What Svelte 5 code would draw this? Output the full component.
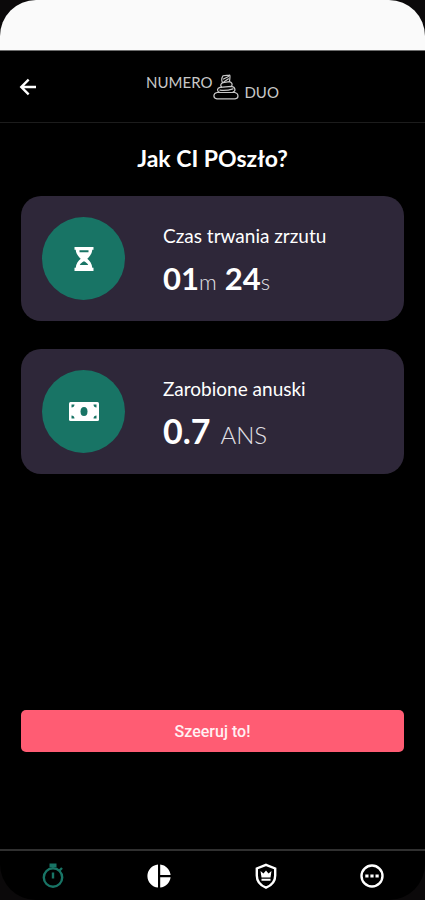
<script lang="ts">
interface Stat {
  id: string;
  label: string;
  icon: 'hourglass' | 'cash';
  parts: { value: string; unit: string }[];
}

const stats: Stat[] = [
  {
    id: 'time',
    label: 'Czas trwania zrzutu',
    icon: 'hourglass',
    parts: [
      { value: '01', unit: 'm' },
      { value: '24', unit: 's' },
    ],
  },
  {
    id: 'earned',
    label: 'Zarobione anuski',
    icon: 'cash',
    parts: [{ value: '0.7', unit: 'ANS' }],
  },
];

const tabs = [
  { id: 'timer', label: 'Stoper' },
  { id: 'charts', label: 'Statystyki' },
  { id: 'ranking', label: 'Ranking' },
  { id: 'more', label: 'Więcej' },
];

let activeTab = $state('timer');
</script>

<div class="screen">
  <div class="status-bar"></div>

  <header>
    <button class="back" aria-label="Wstecz">
      <svg viewBox="0 0 24 24" width="24" height="24" fill="currentColor">
        <path d="M20 10.700H8.200l5.300-5.200L11.800 3.800 3.600 12l8.200 8.200 1.700-1.700-5.300-5.200H20z" />
      </svg>
    </button>
    <div class="logo">
      <span>NUMERO</span>
      <svg viewBox="0 0 26 26" width="26" height="26" fill="none" stroke="currentColor" stroke-width="1.200" stroke-linejoin="round" stroke-linecap="round">
        <path d="M4 18.500h18c4 1.200 4 6 0 6.300H4c-4.300-.5-4-5.500 0-6.300z" />
        <path d="M6.500 18.200c-3-1-2.500-4.300.5-4.900l11.500-.9c4 .6 4.500 4.700 1.500 5.600" />
        <path d="M7 16.200c4 .6 9 0 13-1.300" />
        <path d="M8.500 13c-1.500-1.500-.5-4 1.500-4.300l6.500-1c2.700.7 3.400 3.300 1.800 4.700" />
        <path d="M9.500 8.500C8.500 6.500 8.600 3.800 10 1.800c2.200-.7 4.500-.2 6.800-.6.6 2-.2 4.100-.3 6.300" />
        <path d="M10.500 5l5-2.500M11 7.800l4.500-3" />
      </svg>
      <span class="logo-second">DUO</span>
    </div>
  </header>

  <main>
    <h1>Jak CI POszło?</h1>

    {#each stats as stat (stat.id)}
      <section class="card">
        <div class="badge">
          {#if stat.icon === 'hourglass'}
            <svg viewBox="0 0 20 24" width="20" height="24">
              <path fill="#fff" d="M.5 0h19v2.800h-1.200c-.3 4-2.700 6.800-5 9 2.500 2.200 4.700 5 5 9h1.200V24H.5v-3.200h1.200c.3-4 2.500-6.800 5-9C4.400 9.600 2 6.800 1.700 2.800H.5z" />
              <path fill="#187465" d="M5.500 3.300h9v2h-9zM5.800 18c.8-1.600 2.200-2.700 4.200-3.700 2 1 3.400 2.100 4.200 3.700z" />
            </svg>
          {:else}
            <svg viewBox="0 0 30 19" width="30" height="19">
              <rect width="30" height="19" rx="1.500" fill="#fff" />
              <ellipse cx="15" cy="9.500" rx="3.500" ry="4.500" fill="#187465" />
              <path fill="#187465" d="M2.500 2.500h3c0 1.700-1.300 3-3 3zM27.500 2.500h-3c0 1.700 1.300 3 3 3zM2.500 16.500h3c0-1.700-1.300-3-3-3zM27.500 16.500h-3c0-1.700 1.300-3 3-3z" />
            </svg>
          {/if}
        </div>
        <div class="info">
          <h2>{stat.label}</h2>
          <p class={stat.id}>
            {#each stat.parts as part}
              <span class="part"><strong>{part.value}</strong><span class="unit">{part.unit}</span></span>
            {/each}
          </p>
        </div>
      </section>
    {/each}

    <button class="share">Szeeruj to!</button>
  </main>

  <nav>
    {#each tabs as tab (tab.id)}
      <button
        class="tab"
        class:active={tab.id === activeTab}
        aria-label={tab.label}
        onclick={() => (activeTab = tab.id)}
      >
        <svg viewBox="0 0 26 26" width="26" height="26" fill="none" stroke="currentColor" stroke-width="2.400">
          {#if tab.id === 'timer'}
            <circle cx="13" cy="14.500" r="9.200" />
            <path d="M13 9.500v6M19.500 7.500l2.500-2.500" />
            <path fill="currentColor" stroke="none" d="M9.500.5h7v3.700h-7z" />
          {:else if tab.id === 'charts'}
            <path fill="currentColor" stroke="none" d="M12 1.400v23.200C6 24 1.400 19 1.400 13S6 2 12 1.400zM14.200 1.400C19.700 2 24 6.400 24.600 12H14.200zM14.200 14.200h10.400c-.6 5.500-4.900 9.800-10.400 10.400z" />
          {:else if tab.id === 'ranking'}
            <path d="M13 1.800 22.200 5.500v7c0 5.500-3.700 10-9.200 12.200C7.500 22.500 3.800 18 3.800 12.500v-7z" />
            <path fill="currentColor" stroke="none" d="m7.500 8 3 2.500L13 7.500l2.500 3 3-2.500-1 6.500h-9zM8.500 15.700h9v2.100h-9z" />
          {:else}
            <circle cx="13" cy="13" r="10.500" />
            <path fill="currentColor" stroke="none" d="M6.300 11.400h3.200v3.200H6.300zM11.400 11.400h3.200v3.200h-3.200zM16.500 11.400h3.200v3.200h-3.200z" />
          {/if}
        </svg>
      </button>
    {/each}
  </nav>
</div>

<style>
  :global(body) {
    background: #0b090a;
  }

  .screen {
    display: flex;
    flex-direction: column;
    min-height: 100vh;
    box-sizing: border-box;
    background: #000;
    border-radius: 36px;
    overflow: hidden;
    color: #fff;
    font-family: Lato, "Open Sans", sans-serif;
  }

  button {
    border: none;
    cursor: pointer;
  }

  .status-bar {
    height: 50px;
    background: #fafafa;
    border-bottom: 1px solid #6d6d6d;
  }

  header {
    display: grid;
    grid-template-columns: 1fr auto 1fr;
    align-items: center;
    height: 71px;
    padding: 0 16px;
    border-bottom: 1px solid #1c1c1c;
  }

  .back {
    display: flex;
    justify-self: start;
    padding: 0;
    background: none;
    color: #fff;
  }

  .logo {
    display: flex;
    height: 26px;
    gap: 1px;
    color: #c8c8c8;
    font-size: 15px;
    line-height: 16px;
  }

  .logo-second {
    align-self: flex-end;
    padding-left: 4px;
  }

  main {
    flex: 1;
    display: flex;
    flex-direction: column;
    padding: 19px 21px 97px;
  }

  h1 {
    margin: 0 0 22px;
    font-size: 23px;
    line-height: 32px;
    font-weight: 700;
    text-align: center;
  }

  .card {
    display: flex;
    align-items: center;
    gap: 38px;
    margin-bottom: 28px;
    padding: 21px;
    background: #2e2739;
    border-radius: 20px;
  }

  .badge {
    display: flex;
    align-items: center;
    justify-content: center;
    flex-shrink: 0;
    width: 83px;
    height: 83px;
    background: #187465;
    border-radius: 50%;
  }

  h2 {
    margin: 0 0 10px;
    font-size: 19px;
    line-height: 28px;
    font-weight: 400;
  }

  p {
    display: flex;
    gap: 8px;
    margin: 0;
  }

  .part {
    display: flex;
    align-items: baseline;
  }

  strong {
    font-size: 34px;
    line-height: 36px;
    font-weight: 700;
  }

  .unit {
    color: #e2e0e6;
    font-size: 24px;
    line-height: 24px;
    font-weight: 300;
  }

  .time strong {
    font-size: 31px;
  }

  .time .unit {
    font-size: 22px;
  }

  .earned .unit {
    margin-left: 10px;
  }

  .share {
    margin-top: auto;
    padding: 0;
    height: 42px;
    background: #ff5c73;
    border-radius: 5px;
    color: #fff0f2;
    font-family: Roboto, sans-serif;
    font-size: 16px;
    font-weight: 500;
  }

  nav {
    display: grid;
    grid-template-columns: repeat(4, 1fr);
    height: 49px;
    border-top: 2px solid #303030;
  }

  .tab {
    display: flex;
    align-items: center;
    justify-content: center;
    padding: 0;
    background: none;
    color: #fff;
  }

  .tab.active {
    color: #187465;
  }
</style>
